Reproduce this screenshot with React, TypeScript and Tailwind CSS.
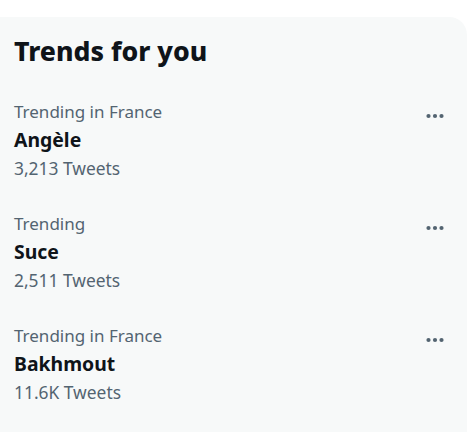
import React from "react";

const trends = [
  { context: "Trending in France", name: "Angèle", count: "3,213 Tweets" },
  { context: "Trending", name: "Suce", count: "2,511 Tweets" },
  { context: "Trending in France", name: "Bakhmout", count: "11.6K Tweets" },
];

function Dots() {
  return (
    <svg width="20" height="20" viewBox="0 0 20 20" className="text-[#536471]">
      <circle cx="3.5" cy="10" r="2.1" fill="currentColor" />
      <circle cx="10" cy="10" r="2.1" fill="currentColor" />
      <circle cx="16.5" cy="10" r="2.1" fill="currentColor" />
    </svg>
  );
}

export default function App() {
  return (
    <div
      className="w-[467px] h-[432px] bg-white pt-[17px] overflow-hidden"
      style={{ fontFamily: '"Noto Sans", "Open Sans", sans-serif' }}
    >
      <div className="h-full bg-[#f7f9f9] rounded-tr-[18px]">
        {/* header */}
        <h2 className="px-[14px] pt-[18px] text-[26.6px] leading-[32px] font-extrabold text-[#0f1419]">
          Trends for you
        </h2>

        <div className="mt-[17px] flex flex-col">
          {trends.map((t) => (
            <div key={t.name} className="flex justify-between px-[14px] py-[14px]">
              <div className="flex flex-col">
                <span className="text-[17px] leading-[28px] text-[#536471]">{t.context}</span>
                <span className="text-[19.4px] leading-[28px] font-bold text-[#0f1419]">{t.name}</span>
                <span className="text-[17.4px] leading-[28px] text-[#536471]">{t.count}</span>
              </div>
              <div className="pr-[8px] pt-[8px]">
                <Dots />
              </div>
            </div>
          ))}
        </div>
      </div>
    </div>
  );
}
